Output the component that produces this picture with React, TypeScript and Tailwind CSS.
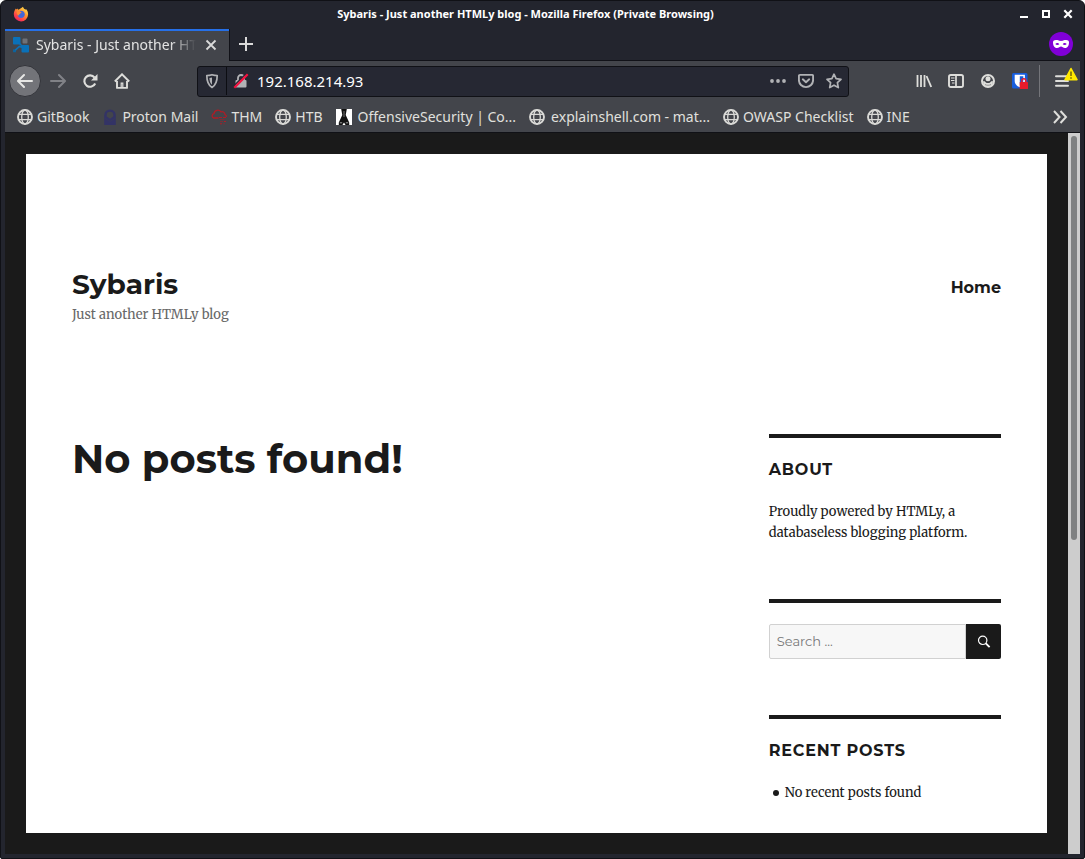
import type { ReactNode } from "react";

function GlobeIcon() {
  return (
    <svg className="size-4 shrink-0" viewBox="0 0 16 16" fill="none" stroke="#d9d9d6" strokeWidth="1.5">
      <circle cx="8" cy="8" r="7" strokeWidth="1.9" />
      <ellipse cx="8" cy="8" rx="3.3" ry="7" strokeWidth="1.3" />
      <path d="M1.8 5.4h12.4M1.8 10.6h12.4" strokeWidth="1.3" />
    </svg>
  );
}

function ProtonIcon() {
  return (
    <svg className="size-4 shrink-0" viewBox="0 0 16 16">
      <path fill="#333366" fillRule="evenodd" d="M2.2 16V6.2a5.8 5.8 0 0 1 11.6 0V16zM4.700 6v1.600L8 9.800l3.300-2.200V6a3.300 3.300 0 0 0-6.600 0z" />
      <path d="M2.2 9 8 12.500 13.800 9" fill="none" stroke="#3b3c55" strokeWidth=".6" />
    </svg>
  );
}

function CloudIcon() {
  return (
    <svg className="size-4 shrink-0" viewBox="0 0 16 16" fill="none">
      <path d="M7.500 9H2.800A2.200 2.200 0 0 1 3 4.700 3.800 3.800 0 0 1 10 3a2.800 2.800 0 0 1 4 2.600c1 .3 1.500 1.300 1.100 2.400" stroke="#b01c26" strokeWidth="1.300" />
      <path d="M8 8.500h3M12 8.500h3M13 12.500h2M9 14.800h2" stroke="#b01c26" />
      <path d="M8.500 10.500h5M9 12.500h3M12 14.800h2" stroke="#7a2f38" />
    </svg>
  );
}

function OffsecIcon() {
  return (
    <svg className="size-4 shrink-0" viewBox="0 0 16 16">
      <path fill="#fff" d="M0 0h16v16H0z" />
      <path fill="#111" d="M5.200 0h5.600L9.700 6l3.500 7.500V16H9.600L8 13.500 6.400 16H2.800v-2.500L6.300 6z" />
      <path d="M8 2v6" stroke="#777" />
      <path d="M3.800 13.800h2.400M9.800 13.800h2.400" stroke="#ddd" strokeWidth=".7" />
    </svg>
  );
}

function FirefoxIcon() {
  return (
    <svg className="size-4" viewBox="0 0 16 16">
      <defs>
        <linearGradient id="flame" x1="0.9" y1="0" x2="0.2" y2="1">
          <stop offset="0.05" stopColor="#ffe34f" />
          <stop offset="0.4" stopColor="#ff9a2e" />
          <stop offset="0.75" stopColor="#ff4148" />
          <stop offset="1" stopColor="#e41f69" />
        </linearGradient>
      </defs>
      <path fill="url(#flame)" d="M10 .8c.3 1.5 1.2 2.1 2.1 3 .7-.2.9-.7.9-.7 1.5 1.6 2.2 3.5 2.1 5.5A7 7 0 0 1 8 15.4 7.2 7.2 0 0 1 .8 8.2c0-2.2.8-4.3 2.1-5.8l.6 1.2 1-1.2.6 1.3c1.8-.3 3-1.5 4.9-2.9z" />
      <path fill="#4367d8" d="M4.9 5.7 7.8 4.8c2.6.2 4 1.5 4 3.7 0 2-1.7 3.4-3.7 3.4A3.5 3.5 0 0 1 4.6 8.5l2.7-.8z" />
      <path fill="#ff8a34" d="M3.8 5.3 6.5 5 8.7 6.5 7.2 7.4 5.2 9.7 4 8z" />
      <path fill="#ffc247" d="M10 .8c.3 2 .6 3.2 2.3 4.6.9.8 1 2.2.7 3.2 1.4-1.4 1.1-3.5-.9-4.800C11.200 3 10.300 2.300 10 .8z" />
    </svg>
  );
}

function SiteIcon() {
  return (
    <svg className="size-4 shrink-0" viewBox="0 0 16 16">
      <rect x="0" y="0" width="7.5" height="7.5" rx="1" fill="#0a71b9" />
      <rect x="9.5" y="1.5" width="5" height="5" rx="1" fill="#6f7177" />
      <rect x="8.5" y="8" width="7.5" height="7.5" rx="1" fill="#0a71b9" />
      <rect x="0" y="12.3" width="3" height="3" rx=".6" fill="#0e639c" />
      <path d="M6 6l4 4M2.3 13.2 6.4 9.5l3.4 1" stroke="#0a71b9" strokeWidth="1.6" fill="none" />
    </svg>
  );
}

function IconButton({ label, className = "", children }: { label: string; className?: string; children: ReactNode }) {
  return (
    <button type="button" aria-label={label} className={"flex size-8 shrink-0 items-center justify-center " + className}>
      {children}
    </button>
  );
}

function TitleBar() {
  return (
    <div className="flex h-7 items-center pb-0.5 pl-2 pr-1">
      <div className="flex w-20 shrink-0"><FirefoxIcon /></div>
      <div className="min-w-0 flex-1 truncate text-center text-[11px] font-bold text-white">
        Sybaris - Just another HTMLy blog - Mozilla Firefox (Private Browsing)
      </div>
      <div className="flex w-[118px] shrink-0 justify-end gap-1.5 text-white">
        <button type="button" aria-label="Minimize" className="flex size-4 items-center justify-center">
          <svg className="size-3" viewBox="0 0 12 12"><path d="M2 8h8v2H2z" fill="currentColor" /></svg>
        </button>
        <button type="button" aria-label="Maximize" className="flex size-4 items-center justify-center">
          <svg className="size-3" viewBox="0 0 12 12"><path d="M3 3h6v6H3z" fill="none" stroke="currentColor" strokeWidth="2" /></svg>
        </button>
        <button type="button" aria-label="Close window" className="flex size-4 items-center justify-center">
          <svg className="size-3" viewBox="0 0 12 12"><path d="m2.300 2.300 7.400 7.400m0-7.400L2.300 9.700" stroke="currentColor" strokeWidth="2.200" /></svg>
        </button>
      </div>
    </div>
  );
}

function TabBar() {
  return (
    <div className="flex h-8 items-stretch">
      <div className="flex w-56 items-center border-t-2 border-[#2670e8] bg-[#43454b] pb-0.5 pl-2 pr-2">
        <SiteIcon />
        <span className="ml-[7px] w-41 overflow-hidden whitespace-nowrap text-sm text-[#e3e3e3] [mask-image:linear-gradient(to_right,black_84%,transparent)]">
          Sybaris - Just another HTMLy blog
        </span>
        <button type="button" aria-label="Close tab" className="ml-1.5 flex size-5 items-center justify-center">
          <svg className="size-3 shrink-0" viewBox="0 0 12 12"><path d="m1.500 1.500 9 9m0-9-9 9" stroke="#dadada" strokeWidth="1.800" /></svg>
        </button>
      </div>
      <div className="flex flex-1 items-center justify-between border-b border-l border-[#111218] pr-[7px] pb-px">
        <IconButton label="New tab">
          <svg className="size-4" viewBox="0 0 16 16"><path d="M8 1v14M1 8h14" stroke="#dadada" strokeWidth="2" /></svg>
        </IconButton>
        <svg className="size-6" viewBox="0 0 24 24" role="img" aria-label="Private browsing">
          <circle cx="12" cy="12" r="12" fill="#8000d7" />
          <path fill="#fff" fillRule="evenodd" d="M4 10.2c0-2 2.2-2.7 4.300-2.100 1.500.5 2.300.9 3.700.9s2.200-.4 3.700-.9c2.100-.6 4.300.1 4.300 2.100 0 3-1.300 5.800-4 5.800-2 0-2.600-1.600-4-1.600S10 16 8 16c-2.700 0-4-2.800-4-5.800zM6.300 12c.8 1.200 3 1.200 4 .2-.8-1.500-3-1.700-4-.2zm7.400.2c1 1 3.200 1 4-.2-1-1.500-3.200-1.300-4 .2z" />
        </svg>
      </div>
    </div>
  );
}

function NavBar() {
  return (
    <div className="flex h-10 items-center pl-1 pr-0.5">
      <IconButton label="Back" className="rounded-full border border-[#33343a] bg-[#737479]">
        <svg className="size-4" viewBox="0 0 16 16" fill="none" stroke="#e6e6e4" strokeWidth="2" strokeLinecap="round" strokeLinejoin="round"><path d="M15 8H1.500M7 2 1 8l6 6" /></svg>
      </IconButton>
      <IconButton label="Forward" className="ml-px">
        <svg className="size-4" viewBox="0 0 16 16" fill="none" stroke="#818287" strokeWidth="2" strokeLinecap="round" strokeLinejoin="round"><path d="M1 8h13.500M9 2l6 6-6 6" /></svg>
      </IconButton>
      <IconButton label="Reload">
        <svg className="size-4" viewBox="0 0 16 16"><path d="M13.200 10.500A5.700 5.700 0 1 1 12.500 4.500" fill="none" stroke="#dededb" strokeWidth="2.100" /><path d="M15.500 1v6.500H9z" fill="#dededb" /></svg>
      </IconButton>
      <IconButton label="Home">
        <svg className="size-4" viewBox="0 0 16 16" fill="none" stroke="#dededb"><path d="M.8 8.500 8 1.300l7.200 7.200" strokeWidth="1.900" /><path d="M3 8v6.900h10V8" strokeWidth="1.900" strokeLinejoin="round" /><path d="M7.200 14.500V10.200h1.600v4.300" strokeWidth="1.200" /></svg>
      </IconButton>
      <div className="ml-[59px] mr-[59px] flex h-[31px] min-w-0 flex-1 items-center rounded-[3px] border border-[#101116] bg-[#262833] pl-0.5">
        <button type="button" aria-label="Tracking protection" className="flex h-full w-6 items-center justify-center">
          <svg className="size-4" viewBox="0 0 16 16"><path d="M8 1.700c1.700.5 3.500.8 5.200.8 0 5.500-1.200 9.500-5.200 12-4-2.500-5.200-6.500-5.200-12 1.700 0 3.500-.3 5.200-.8z" fill="none" stroke="#b1b2b5" strokeWidth="1.700" strokeLinejoin="round" /><path d="M8 4.500v7.300C6.200 10.200 5.500 8 5.400 5z" fill="#b1b2b5" /></svg>
        </button>
        <span className="ml-0.5 h-7 w-px bg-[#0c0d12]" />
        <button type="button" aria-label="Connection is not secure" className="ml-1 flex h-full w-5 items-center justify-center">
          <svg className="size-4" viewBox="0 0 16 16"><path d="M5 8V5a3 3 0 0 1 6 0v3" fill="none" stroke="#b1b2b5" strokeWidth="1.800" /><rect x="2.500" y="7" width="11" height="7.500" rx="1" fill="#b1b2b5" /><path d="M1 12.800 13 .8" stroke="#262833" strokeWidth="1.500" /><path d="M1.300 14.700 14.700 1.300" stroke="#f5113f" strokeWidth="2.200" /></svg>
        </button>
        <input aria-label="Address" defaultValue="192.168.214.93" className="ml-1.5 min-w-0 flex-1 bg-transparent text-[15px] text-white outline-none" />
        <button type="button" aria-label="Page actions" className="flex h-full w-7 items-center justify-center">
          <svg className="size-4" viewBox="0 0 16 16" fill="#b1b2b5"><circle cx="2" cy="8" r="1.900" /><circle cx="8" cy="8" r="1.900" /><circle cx="14" cy="8" r="1.900" /></svg>
        </button>
        <button type="button" aria-label="Save to Pocket" className="flex h-full w-7 items-center justify-center">
          <svg className="size-4" viewBox="0 0 16 16" fill="none" stroke="#b1b2b5" strokeWidth="1.900" strokeLinecap="round" strokeLinejoin="round"><path d="M2 1.900h12c.7 0 1.100.5 1.100 1.100V7a7.100 7.100 0 0 1-14.200 0V3c0-.6.4-1.100 1.100-1.100z" /><path d="M4.800 6.300 8 9.300l3.200-3" /></svg>
        </button>
        <button type="button" aria-label="Bookmark this page" className="flex h-full w-7 items-center justify-center">
          <svg className="size-4" viewBox="0 0 16 16"><path d="m8 1.200 2.100 4.500 4.900.6-3.600 3.400.9 4.900L8 12.200l-4.300 2.400.9-4.900L1 6.300l4.900-.6z" fill="none" stroke="#b1b2b5" strokeWidth="1.700" strokeLinejoin="round" /></svg>
        </button>
      </div>
      <IconButton label="Library">
        <svg className="size-4" viewBox="0 0 16 16" stroke="#dededb" strokeWidth="1.800" fill="none"><path d="M1.500 2v12M5 2v12M8.500 2v12" /><path d="m10.500 3 4.700 11" /></svg>
      </IconButton>
      <IconButton label="Sidebar">
        <svg className="size-4" viewBox="0 0 16 16" fill="none" stroke="#dededb"><rect x="1" y="2" width="14" height="12" rx="1.800" strokeWidth="1.900" /><path d="M8 2v12" strokeWidth="1.700" /><path d="M3 5h3.500M3 7.500h3.500M4 10h2.500" strokeWidth="1.100" /></svg>
      </IconButton>
      <IconButton label="Account">
        <svg className="size-4" viewBox="0 0 16 16"><circle cx="8" cy="8" r="6" fill="none" stroke="#dededb" strokeWidth="2" /><circle cx="8" cy="5.800" r="2.500" fill="#dededb" /><path d="M3 8.200h1.800C5.500 9.600 6.600 10 8 10s2.500-.4 3.200-1.800H13c0 3-2 5-5 5s-5-2-5-5z" fill="#dededb" /><path d="M5 11.500c1.800 1 4.200 1 6 0" stroke="#43454b" strokeWidth=".5" fill="none" /></svg>
      </IconButton>
      <IconButton label="Password manager">
        <svg className="size-4" viewBox="0 0 16 16"><rect width="15.500" height="15.500" rx="1.500" fill="#175ddc" /><path d="M2.700 1.700h10.200V8c0 3-2 5-5.100 6.300C4.700 13 2.700 11 2.700 8z" fill="#fff" /><path d="M7.800 3.300h3.500V8c0 2-1.500 3.500-3.500 4.500z" fill="#175ddc" /><rect x="7.700" y="9" width="8.300" height="7" rx=".6" fill="#e81b2b" /><path d="M9.800 9V7.800a2 2 0 0 1 4 0V9" fill="none" stroke="#e81b2b" strokeWidth="1.500" /></svg>
      </IconButton>
      <span className="ml-[3px] h-8 w-px bg-[#74757a]" />
      <IconButton label="Menu, update available" className="relative ml-1.5">
        <svg className="size-4" viewBox="0 0 16 16"><path d="M2 3.300h12M2 8h12M2 12.700h12" stroke="#dededb" strokeWidth="2" strokeLinecap="round" /></svg>
        <svg className="absolute right-0 top-0.5 size-3.5" viewBox="0 0 14 14"><path d="M7 1.500 13 12.700H1z" fill="#ffe900" stroke="#ffe900" strokeWidth="1.500" strokeLinejoin="round" /><path d="M7 4.500V9m0 1.300v1.500" stroke="#5c500a" strokeWidth="1.300" /></svg>
      </IconButton>
    </div>
  );
}

const bookmarks: { label: string; icon: ReactNode; truncated?: boolean }[] = [
  { label: "GitBook", icon: <GlobeIcon /> },
  { label: "Proton Mail", icon: <ProtonIcon /> },
  { label: "THM", icon: <CloudIcon /> },
  { label: "HTB", icon: <GlobeIcon /> },
  { label: "OffensiveSecurity | Co...", icon: <OffsecIcon />, truncated: true },
  { label: "explainshell.com - mat...", icon: <GlobeIcon />, truncated: true },
  { label: "OWASP Checklist", icon: <GlobeIcon /> },
  { label: "INE", icon: <GlobeIcon /> },
];

function BookmarksBar() {
  return (
    <nav aria-label="Bookmarks" className="flex h-8 items-center justify-between border-b border-[#101116] pl-3 pr-3">
      <ul className="flex items-center gap-[13px]">
        {bookmarks.map((item) => (
          <li key={item.label}>
            <a href="#" className={(item.truncated ? "gap-1.5" : "gap-1") + " flex items-center whitespace-nowrap text-sm text-[#e0e0de]"}>
              {item.icon}
              {item.label}
            </a>
          </li>
        ))}
      </ul>
      <button type="button" aria-label="More bookmarks">
        <svg className="size-4" viewBox="0 0 16 16" fill="none" stroke="#dededb" strokeWidth="2"><path d="m2 2 5.500 6L2 14M8.500 2l5.500 6-5.500 6" /></svg>
      </button>
    </nav>
  );
}

function Widget({ title, children }: { title?: string; children: ReactNode }) {
  return (
    <section className="border-t-4 border-[#1a1a1a] pt-[21px]">
      {title && <h2 className="mb-5 font-['Montserrat','Inter',sans-serif] text-base leading-[22px] font-bold tracking-wider uppercase">{title}</h2>}
      {children}
    </section>
  );
}

function BlogPage() {
  return (
    <div className="m-[21px] flex-1 bg-white px-[46px] pt-[112px] pb-[30px] text-[#1a1a1a]">
      <header className="flex items-start justify-between">
        <div>
          <p className="font-['Montserrat','Inter',sans-serif] text-[28px] leading-9 font-bold"><a href="#">Sybaris</a></p>
          <p className="mt-[3px] text-[13px] leading-5 text-[#686868]">Just another HTMLy blog</p>
        </div>
        <nav aria-label="Primary" className="pt-[9px]">
          <a href="#" className="font-['Montserrat','Inter',sans-serif] text-base leading-6 font-bold">Home</a>
        </nav>
      </header>
      <div className="mt-[109px] flex justify-between">
        <main>
          <h1 className="font-['Montserrat','Inter',sans-serif] text-[40px] leading-[50px] font-bold">No posts found!</h1>
        </main>
        <aside className="flex w-1/4 flex-col gap-14 text-[13px] leading-[21px]">
          <Widget title="About">
            <p>Proudly powered by HTMLy, a databaseless blogging platform.</p>
          </Widget>
          <Widget>
            <form className="flex h-[35px]" onSubmit={(event) => event.preventDefault()}>
              <input type="search" aria-label="Search" placeholder="Search ..." className="min-w-0 flex-1 rounded-l-xs border border-[#d1d1d1] bg-[#f7f7f7] px-[7px] font-['Montserrat','Inter',sans-serif] text-[13px] placeholder:text-[#777] outline-none" />
              <button type="submit" aria-label="Submit search" className="flex w-[35px] items-center justify-center rounded-r-xs bg-[#1a1a1a]">
                <svg className="size-3.5" viewBox="0 0 14 14" fill="none" stroke="#fff"><circle cx="5.700" cy="5.300" r="4.200" strokeWidth="1.200" /><path d="m8.800 8.400 3.800 3.800" strokeWidth="1.900" /></svg>
              </button>
            </form>
          </Widget>
          <Widget title="Recent posts">
            <ul className="pl-1">
              <li className="flex items-center gap-1.5">
                <span aria-hidden="true" className="size-1.5 rounded-full bg-[#1a1a1a]" />
                No recent posts found
              </li>
            </ul>
          </Widget>
        </aside>
      </div>
    </div>
  );
}

export default function App() {
  return (
    <div className="min-h-screen bg-white">
      <div className="flex min-h-screen flex-col rounded-t-md rounded-b-xs border border-[#101116] bg-[#23252e] px-1 pb-1 font-['Noto_Sans',sans-serif]">
        <TitleBar />
        <TabBar />
        <div className="bg-[#43454b]">
          <NavBar />
          <BookmarksBar />
        </div>
        <div className="flex flex-1 bg-[#1a1a1a]">
          <div className="flex min-w-0 flex-1 flex-col font-['Merriweather','DejaVu_Serif_Condensed','DejaVu_Serif',serif]">
            <BlogPage />
          </div>
          <div className="w-3 shrink-0 bg-[#cdcdcd] px-[3px] py-[3px]">
            <div className="h-[404px] rounded-full bg-[#7f8182]" />
          </div>
        </div>
      </div>
    </div>
  );
}
